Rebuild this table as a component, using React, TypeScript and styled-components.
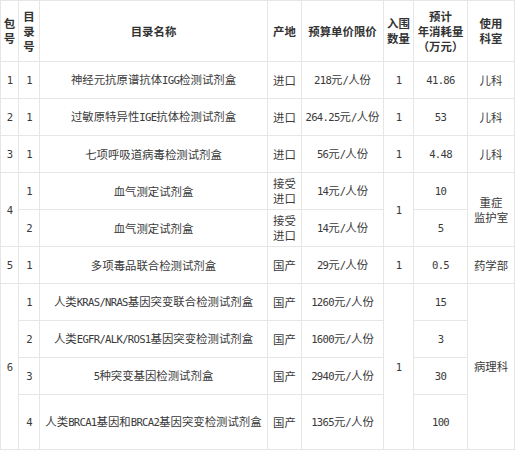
import React from "react";
import styled, { createGlobalStyle } from "styled-components";

const Global = createGlobalStyle`
  html, body { margin: 0; padding: 0; background: #ffffff; }
  body { font-family: "Noto Sans CJK SC", "Noto Sans", sans-serif; color: #333333; }
`;

const Table = styled.table`
  border-collapse: collapse;
  table-layout: fixed;
  width: 514px;
  font-size: 11.4px;
  line-height: 15px;
`;

const HeadRow = styled.tr`
  height: 61px;
`;

const Row = styled.tr<{ $tall?: boolean }>`
  height: ${(p) => (p.$tall ? "55px" : "37px")};
`;

const Th = styled.th`
  border: 1px solid #e6e6e6;
  padding: 0 1px;
  font-weight: 700;
  text-align: center;
  vertical-align: middle;
  color: #333333;
`;

const Td = styled.td`
  border: 1px solid #e6e6e6;
  padding: 0 1px;
  font-weight: 400;
  text-align: center;
  vertical-align: middle;
  color: #3a3a3a;
  white-space: nowrap;
`;

const Half = styled.span`
  font-family: "DejaVu Sans Mono", "Liberation Mono", monospace;
  font-size: 10.6px;
  letter-spacing: -0.7px;
`;

const T = ({ s }: { s: string }) => {
  const parts = s.split(/([\x21-\x7e]+)/);
  return (
    <>
      {parts.map((p, i) =>
        /^[\x21-\x7e]+$/.test(p) ? <Half key={i}>{p}</Half> : <React.Fragment key={i}>{p}</React.Fragment>
      )}
    </>
  );
};

const Lines = ({ s }: { s: string[] }) => (
  <>
    {s.map((l, i) => (
      <React.Fragment key={i}>
        {i > 0 && <br />}
        <T s={l} />
      </React.Fragment>
    ))}
  </>
);

const widths = [18, 21, 228, 34, 82, 30, 54, 47];

export default function App() {
  return (
    <>
      <Global />
      <Table>
        <colgroup>
          {widths.map((w, i) => (
            <col key={i} style={{ width: w }} />
          ))}
        </colgroup>
        <thead>
          <HeadRow>
            <Th><Lines s={["包", "号"]} /></Th>
            <Th><Lines s={["目", "录", "号"]} /></Th>
            <Th>目录名称</Th>
            <Th>产地</Th>
            <Th>预算单价限价</Th>
            <Th><Lines s={["入围", "数量"]} /></Th>
            <Th><Lines s={["预计", "年消耗量", "（万元）"]} /></Th>
            <Th><Lines s={["使用", "科室"]} /></Th>
          </HeadRow>
        </thead>
        <tbody>
          <Row>
            <Td><T s="1" /></Td>
            <Td><T s="1" /></Td>
            <Td><T s="神经元抗原谱抗体IGG检测试剂盒" /></Td>
            <Td>进口</Td>
            <Td><T s="218元/人份" /></Td>
            <Td><T s="1" /></Td>
            <Td><T s="41.86" /></Td>
            <Td>儿科</Td>
          </Row>
          <Row>
            <Td><T s="2" /></Td>
            <Td><T s="1" /></Td>
            <Td><T s="过敏原特异性IGE抗体检测试剂盒" /></Td>
            <Td>进口</Td>
            <Td><T s="264.25元/人份" /></Td>
            <Td><T s="1" /></Td>
            <Td><T s="53" /></Td>
            <Td>儿科</Td>
          </Row>
          <Row>
            <Td><T s="3" /></Td>
            <Td><T s="1" /></Td>
            <Td>七项呼吸道病毒检测试剂盒</Td>
            <Td>进口</Td>
            <Td><T s="56元/人份" /></Td>
            <Td><T s="1" /></Td>
            <Td><T s="4.48" /></Td>
            <Td>儿科</Td>
          </Row>
          <Row>
            <Td rowSpan={2}><T s="4" /></Td>
            <Td><T s="1" /></Td>
            <Td>血气测定试剂盒</Td>
            <Td><Lines s={["接受", "进口"]} /></Td>
            <Td><T s="14元/人份" /></Td>
            <Td rowSpan={2}><T s="1" /></Td>
            <Td><T s="10" /></Td>
            <Td rowSpan={2}><Lines s={["重症", "监护室"]} /></Td>
          </Row>
          <Row>
            <Td><T s="2" /></Td>
            <Td>血气测定试剂盒</Td>
            <Td><Lines s={["接受", "进口"]} /></Td>
            <Td><T s="14元/人份" /></Td>
            <Td><T s="5" /></Td>
          </Row>
          <Row>
            <Td><T s="5" /></Td>
            <Td><T s="1" /></Td>
            <Td>多项毒品联合检测试剂盒</Td>
            <Td>国产</Td>
            <Td><T s="29元/人份" /></Td>
            <Td><T s="1" /></Td>
            <Td><T s="0.5" /></Td>
            <Td>药学部</Td>
          </Row>
          <Row>
            <Td rowSpan={4}><T s="6" /></Td>
            <Td><T s="1" /></Td>
            <Td><T s="人类KRAS/NRAS基因突变联合检测试剂盒" /></Td>
            <Td>国产</Td>
            <Td><T s="1260元/人份" /></Td>
            <Td rowSpan={4}><T s="1" /></Td>
            <Td><T s="15" /></Td>
            <Td rowSpan={4}>病理科</Td>
          </Row>
          <Row>
            <Td><T s="2" /></Td>
            <Td><T s="人类EGFR/ALK/ROS1基因突变检测试剂盒" /></Td>
            <Td>国产</Td>
            <Td><T s="1600元/人份" /></Td>
            <Td><T s="3" /></Td>
          </Row>
          <Row>
            <Td><T s="3" /></Td>
            <Td><T s="5种突变基因检测试剂盒" /></Td>
            <Td>国产</Td>
            <Td><T s="2940元/人份" /></Td>
            <Td><T s="30" /></Td>
          </Row>
          <Row $tall>
            <Td><T s="4" /></Td>
            <Td><T s="人类BRCA1基因和BRCA2基因突变检测试剂盒" /></Td>
            <Td>国产</Td>
            <Td><T s="1365元/人份" /></Td>
            <Td><T s="100" /></Td>
          </Row>
        </tbody>
      </Table>
    </>
  );
}
